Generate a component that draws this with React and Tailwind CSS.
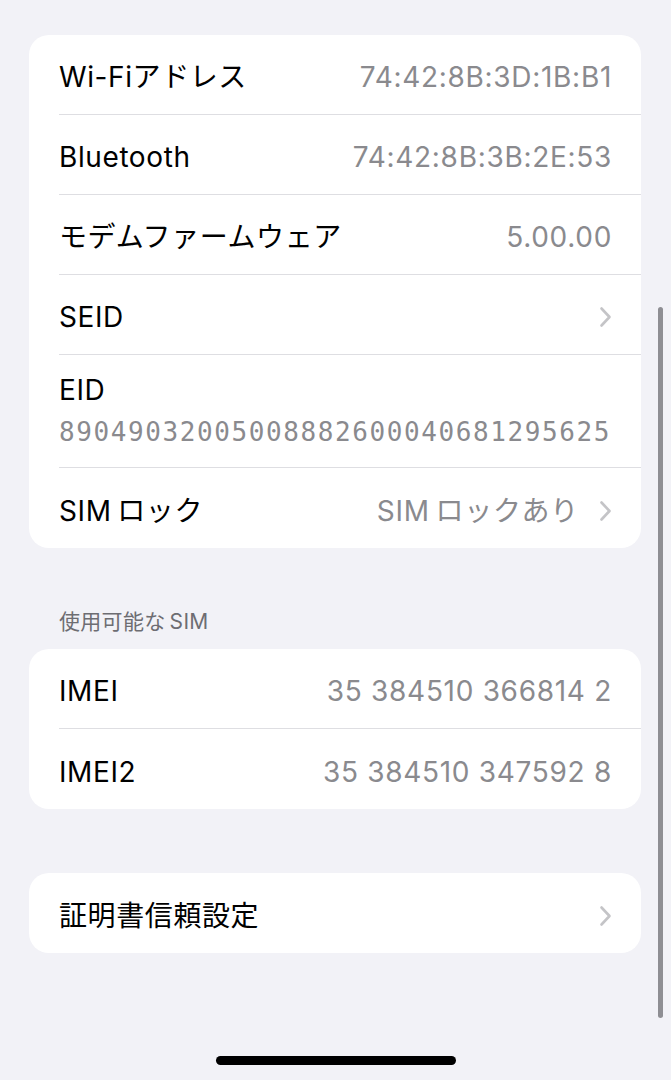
import React from "react";

const font = { fontFamily: '"Inter", "Noto Sans CJK JP", sans-serif' };

function Chevron() {
  return (
    <svg width="13" height="22" viewBox="0 0 13 22" className="shrink-0">
      <path d="M2.5 2.5 L10.5 11 L2.5 19.5" fill="none" stroke="#c4c4c7" strokeWidth="2.6" strokeLinecap="round" strokeLinejoin="round" />
    </svg>
  );
}

function Row({ label, value, chevron, last }) {
  return (
    <div className="pl-[30px]">
      <div className={`h-[80px] pt-[5px] flex items-center justify-between pr-[29px] ${last ? "" : "border-b border-[#dedee2]"}`}>
        <span className="text-[28px] text-black tracking-[0.6px]">{label}</span>
        <div className="flex items-center gap-[20px]">
          {value && <span className="text-[28px] text-[#8a8a8e] tracking-[0.7px]">{value}</span>}
          {chevron && <Chevron />}
        </div>
      </div>
    </div>
  );
}

export default function App() {
  return (
    <div style={font} className="relative w-[671px] h-[1080px] bg-[#f2f2f7] overflow-hidden">
      <div className="pt-[35px] pl-[29px] pr-[30px] flex flex-col">
        <div className="bg-white rounded-[20px] overflow-hidden">
          <Row label="Wi-Fiアドレス" value="74:42:8B:3D:1B:B1" />
          <Row label="Bluetooth" value="74:42:8B:3B:2E:53" />
          <Row label="モデムファームウェア" value="5.00.00" />
          <Row label="SEID" chevron />
          <div className="pl-[30px]">
            <div className="h-[113px] flex flex-col justify-center border-b border-[#dedee2] pr-[29px]">
              <span className="text-[28px] text-black leading-[36px] tracking-[0.6px]">EID</span>
              <span className="text-[26px] text-[#8a8a8e] leading-[36px] mt-[6px] tracking-[1.6px]" style={{ fontFamily: '"DejaVu Sans Mono", monospace' }}>
                89049032005008882600040681295625
              </span>
            </div>
          </div>
          <Row label={"SIM\u2009ロック"} value={"SIM\u2009ロックあり"} chevron last />
        </div>

        <div className="mt-[60px] mb-[13px] pl-[30px] text-[21px] leading-[28px] tracking-[0.3px] text-[#6d6d72]">{"使用可能な\u2009SIM"}</div>

        <div className="bg-white rounded-[20px] overflow-hidden">
          <Row label="IMEI" value="35 384510 366814 2" />
          <Row label="IMEI2" value="35 384510 347592 8" last />
        </div>

        <div className="mt-[64px] bg-white rounded-[20px] overflow-hidden">
          <Row label="証明書信頼設定" chevron last />
        </div>
      </div>

      <div className="absolute left-[658px] top-[307px] w-[5px] h-[711px] rounded-full bg-[#8e8e93]" />
      <div className="absolute left-[216px] top-[1056px] w-[240px] h-[9px] rounded-full bg-black" />
    </div>
  );
}
